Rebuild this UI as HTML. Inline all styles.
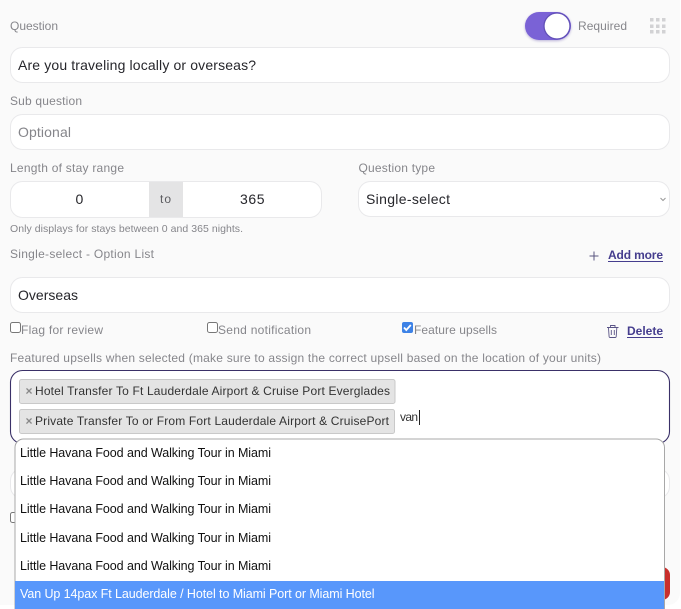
<!DOCTYPE html>
<html><head><meta charset="utf-8"><style>
html,body{margin:0;padding:0;width:681px;height:609px;overflow:hidden;background:#fff}
svg{display:block}
text{font-family:"Liberation Sans",sans-serif}
.l{font-size:12px;fill:#86868b}
.i{font-size:14px;fill:#26262b}
.o{font-size:12.500px;fill:#111}
</style></head><body>
<svg width="681" height="609" viewBox="0 0 681 609" xmlns="http://www.w3.org/2000/svg">
<defs><filter id="s" x="-30%" y="-30%" width="160%" height="160%"><feGaussianBlur stdDeviation="1.200"/></filter></defs>
<rect x="-12" y="-12" width="692" height="617" rx="12" fill="#fafafa"/>
<g fill="#fff" stroke="#e9e9eb">
<rect x="10.500" y="47.500" width="659" height="35" rx="12"/>
<rect x="10.500" y="114.500" width="659" height="35" rx="12"/>
<rect x="10.500" y="181.500" width="311" height="36" rx="12"/>
<rect x="358.500" y="181.500" width="311" height="35" rx="12"/>
<rect x="10.500" y="277.500" width="659" height="35" rx="12"/>
<rect x="10.500" y="468.500" width="659" height="30" rx="12"/>
</g>
<rect x="149" y="182" width="34" height="35" fill="#e4e4e5"/>
<text class="l" x="10" y="30" textLength="48">Question</text>
<text class="l" x="578" y="30" textLength="49">Required</text>
<rect x="525" y="13" width="46" height="28" rx="14" fill="#6d5bb0" opacity=".45" filter="url(#s)"/>
<rect x="525" y="12" width="46" height="28" rx="14" fill="#7a62d6"/>
<circle cx="557" cy="26" r="13" fill="#fff" stroke="#6250b8" stroke-width="1.300"/>
<g fill="#d2d2d4"><rect x="650" y="18" width="3.500" height="3.500"/><rect x="656" y="18" width="3.500" height="3.500"/><rect x="662" y="18" width="3.500" height="3.500"/><rect x="650" y="24.500" width="3.500" height="3.500"/><rect x="656" y="24.500" width="3.500" height="3.500"/><rect x="662" y="24.500" width="3.500" height="3.500"/><rect x="650" y="30" width="3.500" height="3.500"/><rect x="656" y="30" width="3.500" height="3.500"/><rect x="662" y="30" width="3.500" height="3.500"/></g>
<text class="i" x="18" y="70" textLength="238">Are you traveling locally or overseas?</text>
<text class="l" x="10" y="105" textLength="72">Sub question</text>
<text class="i" x="18" y="137" textLength="53" style="fill:#85858a">Optional</text>
<text class="l" x="10" y="172" textLength="114">Length of stay range</text>
<text class="l" x="358.500" y="172" textLength="76.500">Question type</text>
<text class="i" x="75.500" y="204" textLength="8.500">0</text>
<text class="l" x="160" y="203" textLength="11" style="fill:#5c5c60">to</text>
<text class="i" x="240" y="204" textLength="24.500">365</text>
<text class="i" x="366" y="204" textLength="84">Single-select</text>
<path d="M660.500 198l2.500 2.500 2.500-2.500" fill="none" stroke="#999" stroke-width="1"/>
<text class="l" x="10" y="232" textLength="233" style="font-size:10.500px">Only displays for stays between 0 and 365 nights.</text>
<text class="l" x="10" y="258" textLength="144">Single-select - Option List</text>
<path d="M589.500 256h9M594 251.500v9" stroke="#5a5580" stroke-width="1" fill="none"/>
<text x="608" y="259" textLength="55" style="font-size:12px;font-weight:bold;fill:#453d8e">Add more</text>
<rect x="608" y="261" width="55" height="1" fill="#453d8e"/>
<text class="i" x="18" y="300" textLength="60">Overseas</text>
<g fill="#fff" stroke="#777"><rect x="10.500" y="322.500" width="10" height="10" rx="2"/><rect x="207.500" y="322.500" width="10" height="10" rx="2"/></g>
<rect x="402" y="322" width="11" height="11" rx="2" fill="#3d82e6"/>
<path d="M404 327.500l2.300 2.500 4.500-5" fill="none" stroke="#fff" stroke-width="1.800"/>
<text class="l" x="21" y="334" textLength="82">Flag for review</text>
<text class="l" x="218" y="334" textLength="93">Send notification</text>
<text class="l" x="414" y="334" textLength="83">Feature upsells</text>
<g fill="none" stroke="#5a5486" stroke-width=".9"><path d="M607 327.500h11.500M610.500 327v-1.500h4.500v1.500M608.500 328l.6 8.500q.1 1 1 1h5.100q.9 0 1-1l.6-8.500M611.300 330v5M614.300 330v5"/></g>
<text x="627" y="335" textLength="36" style="font-size:12px;font-weight:bold;fill:#453d8e">Delete</text>
<rect x="627" y="337" width="36" height="1" fill="#453d8e"/>
<text class="l" x="10" y="362" textLength="591">Featured upsells when selected (make sure to assign the correct upsell based on the location of your units)</text>
<rect x="10.500" y="370.500" width="659" height="73" rx="12" fill="#fff" stroke="#3a3068" stroke-width="1.100"/>
<g fill="#e4e4e4" stroke="#c9c9c9"><rect x="19.500" y="379.500" width="375.500" height="24" rx="2"/><rect x="19.500" y="409.500" width="375" height="24" rx="2"/></g>
<text x="25.500" y="395" style="font-size:12px;font-weight:bold;fill:#888">×</text>
<text x="25.500" y="425" style="font-size:12px;font-weight:bold;fill:#888">×</text>
<text x="35" y="395" textLength="355" style="font-size:12px;fill:#333">Hotel Transfer To Ft Lauderdale Airport &amp; Cruise Port Everglades</text>
<text x="35" y="425" textLength="354" style="font-size:12px;fill:#333">Private Transfer To or From Fort Lauderdale Airport &amp; CruisePort</text>
<text x="400" y="421" textLength="18" style="font-size:12px;fill:#333">van</text>
<rect x="419" y="410" width="1" height="15" fill="#222"/>
<rect x="10.500" y="512.500" width="6" height="10" rx="2" fill="#fff" stroke="#777"/>
<rect x="640" y="567" width="30" height="33" rx="8" fill="#c92f2c"/>
<path d="M15 620V447.500a8.500 8.500 0 0 1 8.500-8.500H656a8.500 8.500 0 0 1 8.500 8.500V620z" fill="#fff" stroke="#a8a8a8" stroke-width="1"/>
<rect x="15" y="581" width="649" height="28" fill="#5897fb"/>
<text class="o" x="20" y="457" textLength="251">Little Havana Food and Walking Tour in Miami</text>
<text class="o" x="20" y="485" textLength="251">Little Havana Food and Walking Tour in Miami</text>
<text class="o" x="20" y="513" textLength="251">Little Havana Food and Walking Tour in Miami</text>
<text class="o" x="20" y="542" textLength="251">Little Havana Food and Walking Tour in Miami</text>
<text class="o" x="20" y="570" textLength="251">Little Havana Food and Walking Tour in Miami</text>
<text class="o" x="20" y="598" textLength="354.500" style="fill:#fff">Van Up 14pax Ft Lauderdale / Hotel to Miami Port or Miami Hotel</text>
</svg>
</body></html>
